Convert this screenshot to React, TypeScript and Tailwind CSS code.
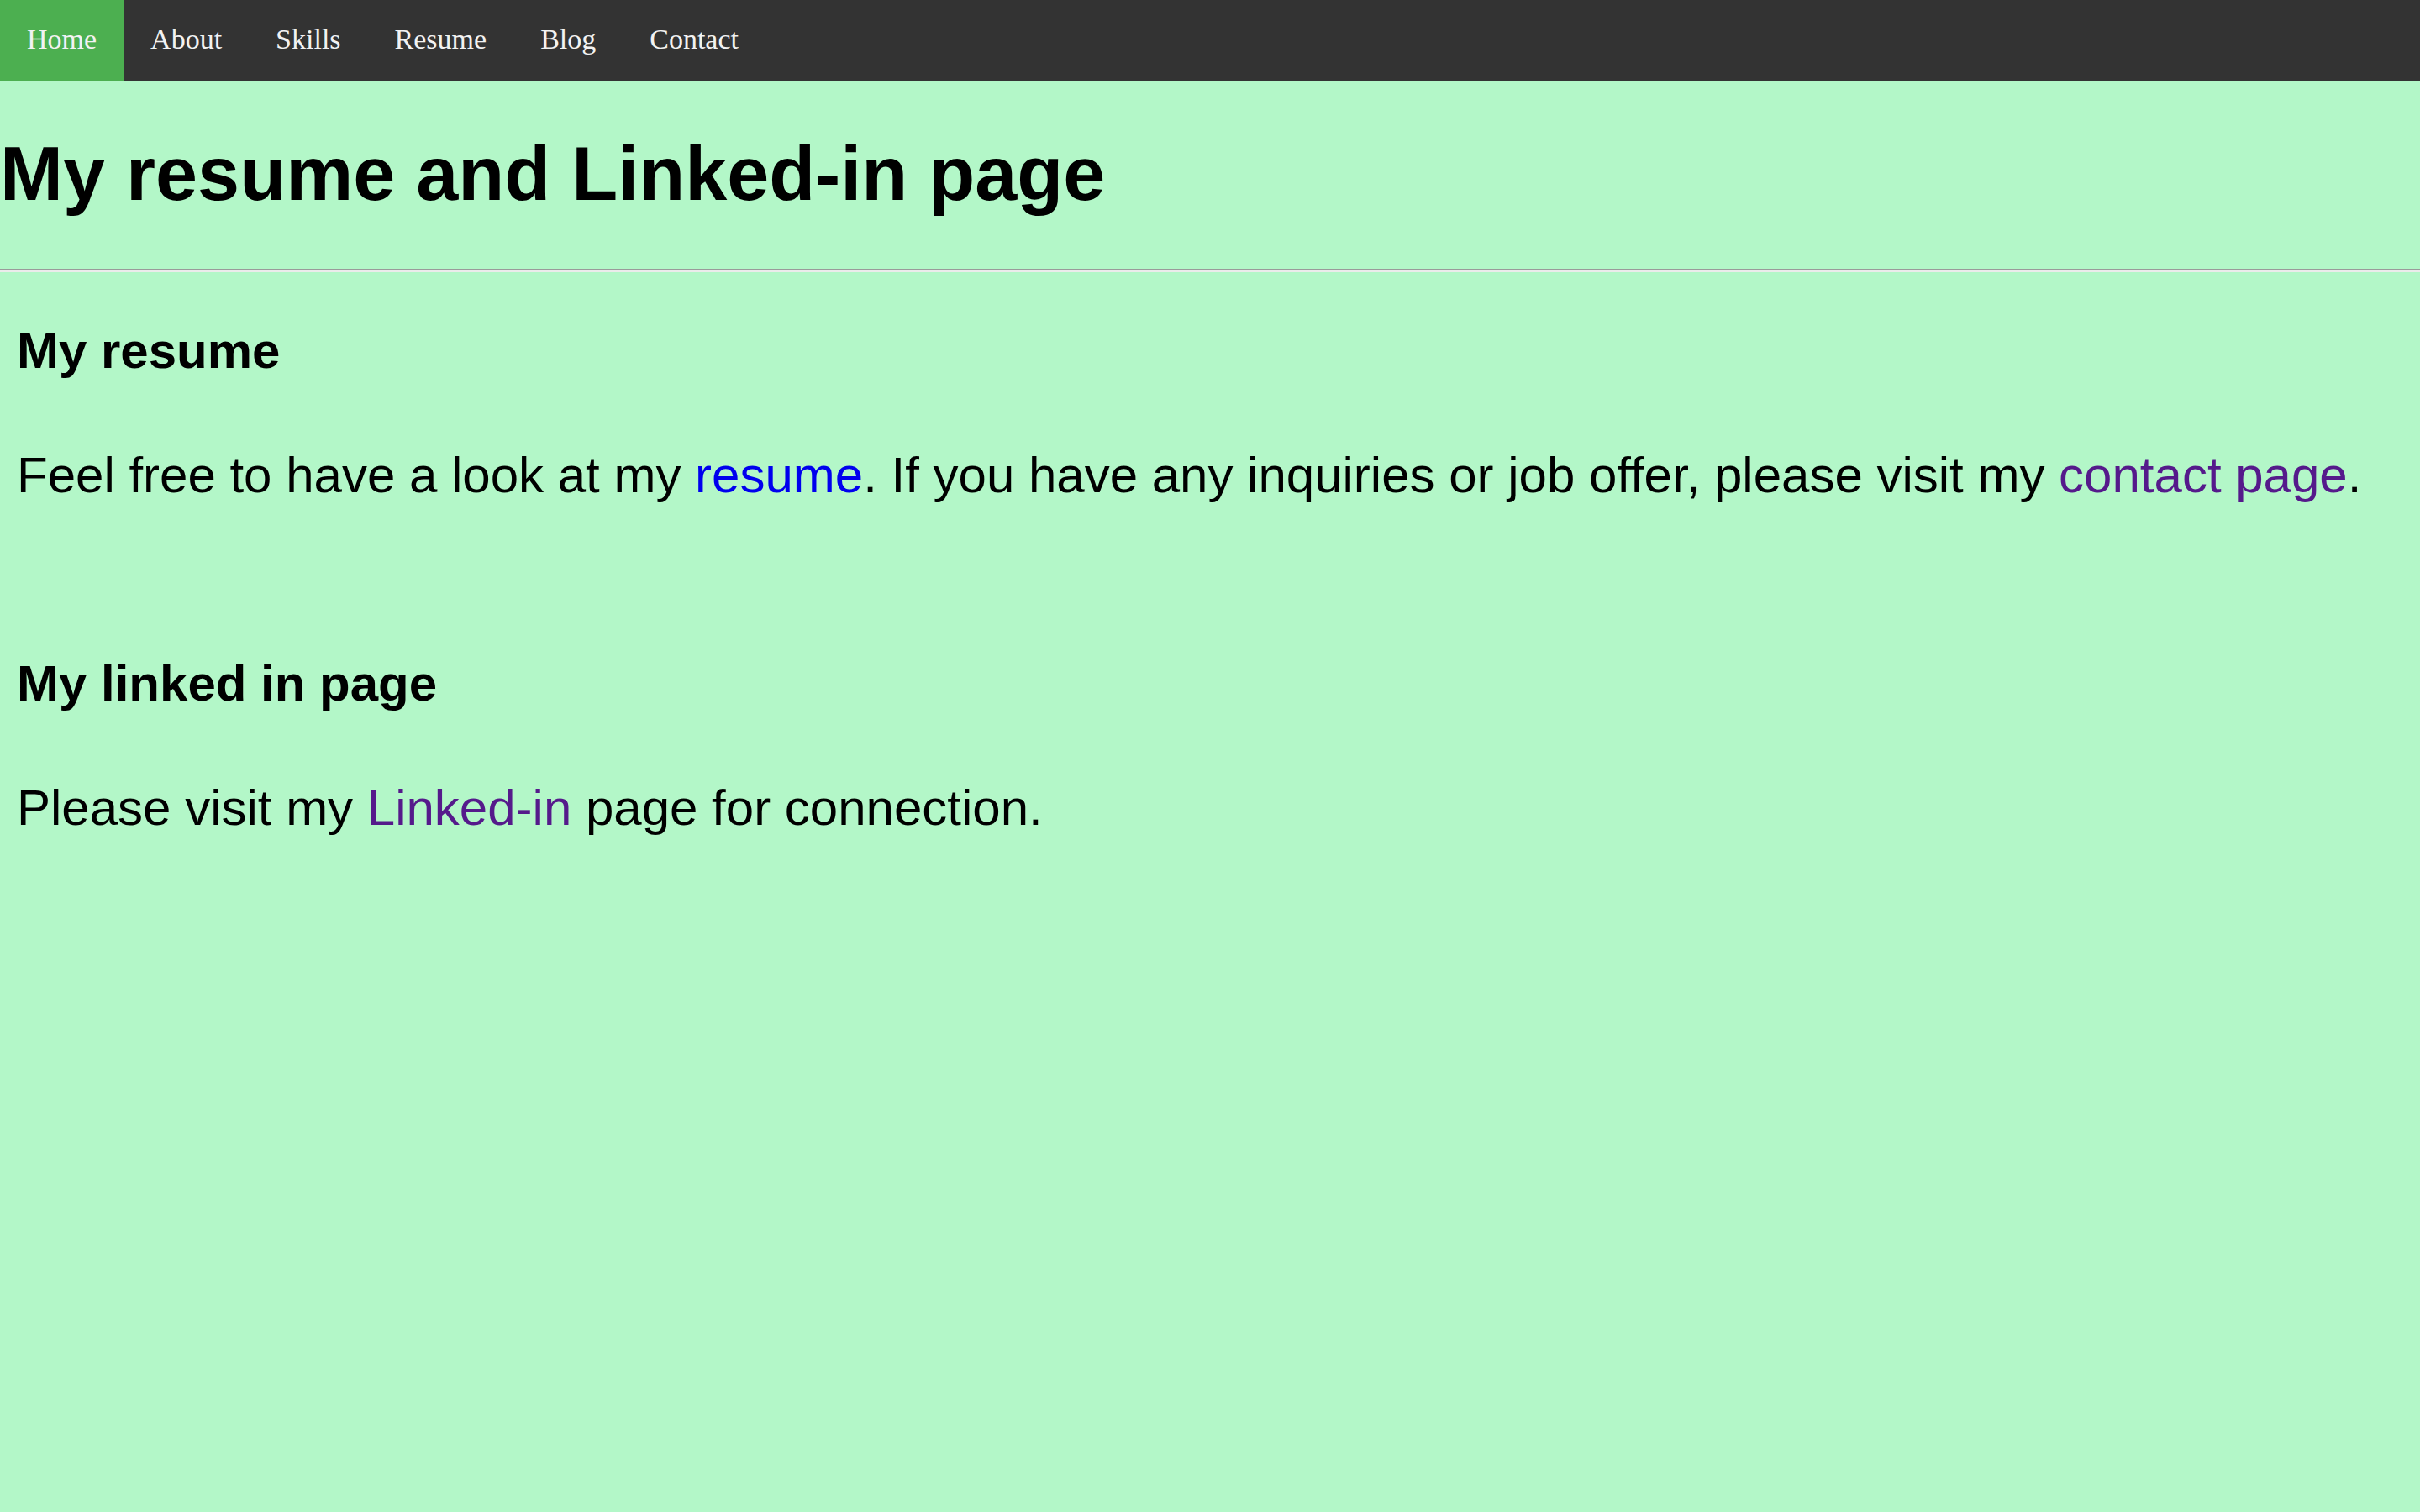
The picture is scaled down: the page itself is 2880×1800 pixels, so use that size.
const navLinks = [
  { label: "Home", active: true },
  { label: "About" },
  { label: "Skills" },
  { label: "Resume" },
  { label: "Blog" },
  { label: "Contact" },
];

const NavBar = () => {
  return (
    <nav className="flex bg-[#333333] font-['Liberation_Serif',serif]">
      {navLinks.map((link) => (
        <a
          key={link.label}
          href="#"
          className={`block px-[32px] pt-[27px] pb-[29px] text-[34px] leading-[40px] text-[#f2f2f2] ${
            link.active ? "bg-[#4caf50]" : ""
          }`}>
          {link.label}
        </a>
      ))}
    </nav>
  );
};

const App = () => {
  return (
    <div className="min-h-screen bg-[#b3f7c8] font-['Liberation_Sans',Arial,sans-serif] text-black">
      <NavBar />

      <h1 className="mt-[60px] mb-[61px] text-[90px] font-bold leading-[103px]">
        My resume and Linked-in page
      </h1>
      <hr className="border-0 border-t-2 border-b-2 border-t-[#9a9a9a] border-b-[#ebebeb]" />

      <section className="px-[20px]">
        <h2 className="mt-[59px] text-[60px] font-bold leading-[69px]">My resume</h2>
        <p className="mt-[79px] text-[60px] leading-[69px]">
          Feel free to have a look at my{" "}
          <a href="#" className="text-[#0000ee]">
            resume
          </a>
          . If you have any inquiries or job offer, please visit my{" "}
          <a href="#" className="text-[#551a8b]">
            contact page
          </a>
          .
        </p>
      </section>

      <section className="px-[20px]">
        <h2 className="mt-[179px] text-[60px] font-bold leading-[69px]">My linked in page</h2>
        <p className="mt-[79px] text-[60px] leading-[69px]">
          Please visit my{" "}
          <a href="#" className="text-[#551a8b]">
            Linked-in
          </a>{" "}
          page for connection.
        </p>
      </section>
    </div>
  );
};

export default App;
